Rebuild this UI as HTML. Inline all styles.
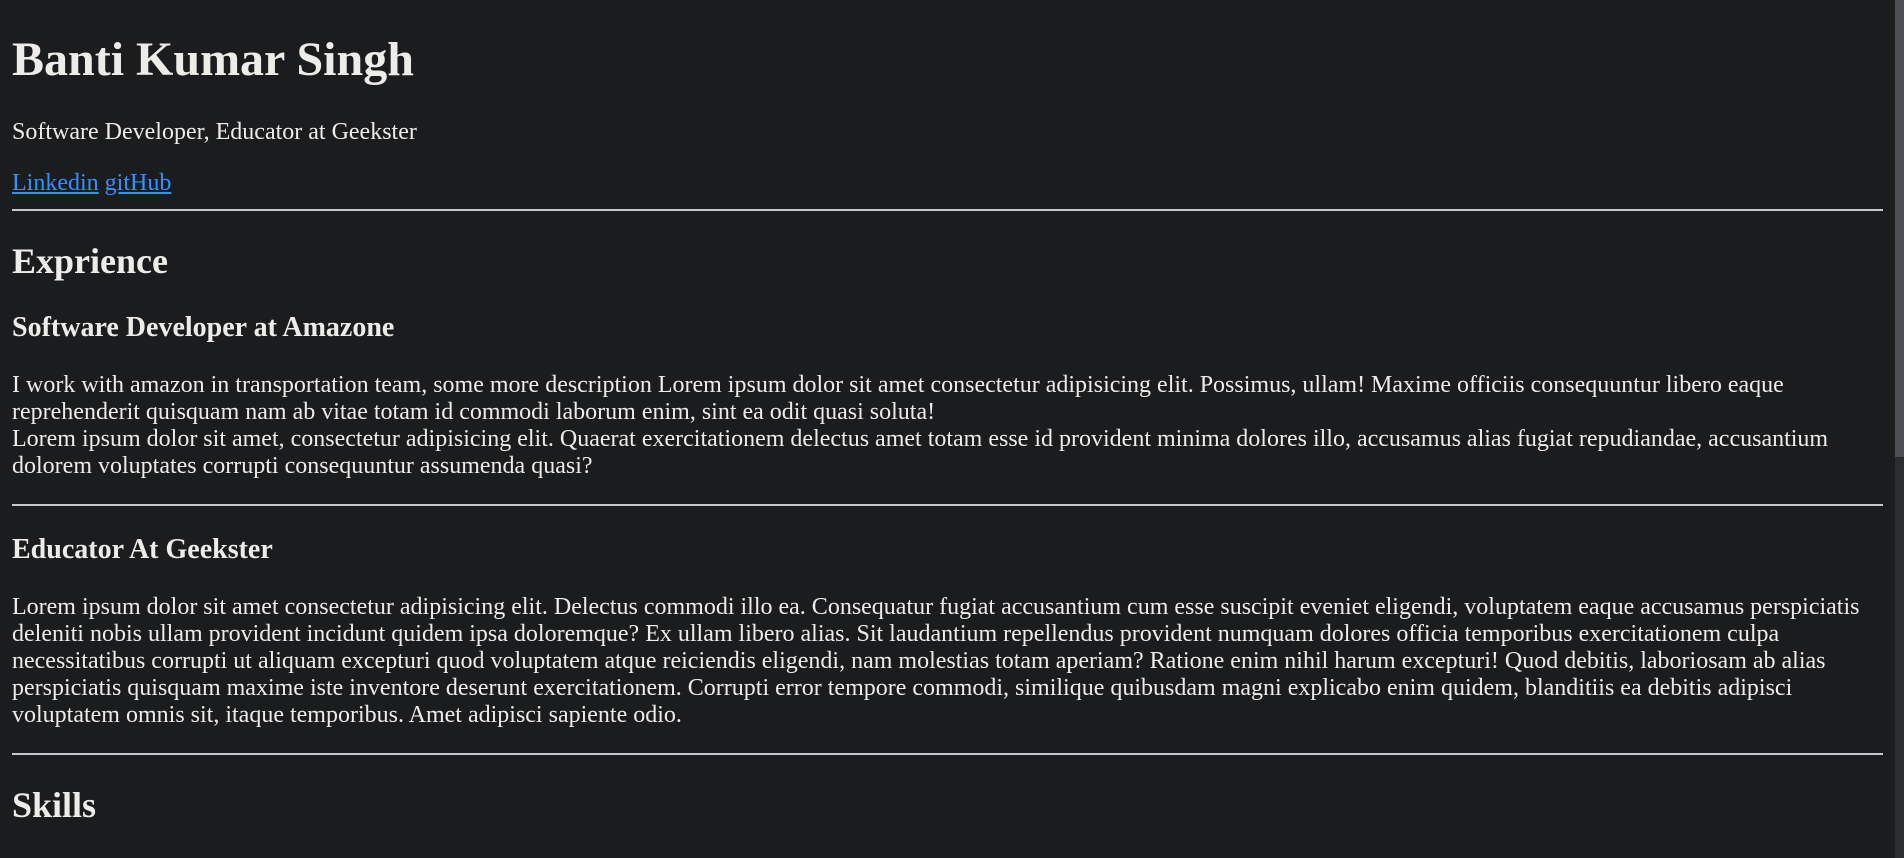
<!DOCTYPE html>
<html><head><meta charset="utf-8"><style>
html,body{margin:0;padding:0;height:858px;overflow:hidden;background:#1b1c1e;}
body{font-family:"Liberation Serif",serif;font-size:24px;line-height:27px;color:#eeece9;}
.wrap{position:absolute;left:12px;top:0;width:1871px;}
h1{font-size:48px;line-height:55px;margin:32px 0;}
h2{font-size:36px;line-height:41px;margin:30px 0;}
h3{font-size:28px;line-height:32px;margin:28px 0;}
p{margin:24px 0;}
a{color:#3391ff;text-decoration:underline;}
hr{border:0;border-top:2px solid #c8c8c8;margin:12px 0 12px;height:0;}
hr.first{margin:-12px 0 15px;}
.sb{position:absolute;right:0;top:0;width:9px;height:858px;background:#2b2d2f;}
.th{position:absolute;right:0;top:0;width:9px;height:457px;background:#4b4f53;}
</style></head><body>
<div class="wrap">
<h1>Banti Kumar Singh</h1>
<p>Software Developer, Educator at Geekster</p>
<p><a>Linkedin</a> <a>gitHub</a></p>
<hr class="first">
<h2>Exprience</h2>
<h3>Software Developer at Amazone</h3>
<p>I work with amazon in transportation team, some more description Lorem ipsum dolor sit amet consectetur adipisicing elit. Possimus, ullam! Maxime officiis consequuntur libero eaque reprehenderit quisquam nam ab vitae totam id commodi laborum enim, sint ea odit quasi soluta!<br>Lorem ipsum dolor sit amet, consectetur adipisicing elit. Quaerat exercitationem delectus amet totam esse id provident minima dolores illo, accusamus alias fugiat repudiandae, accusantium dolorem voluptates corrupti consequuntur assumenda quasi?</p>
<hr>
<h3>Educator At Geekster</h3>
<p>Lorem ipsum dolor sit amet consectetur adipisicing elit. Delectus commodi illo ea. Consequatur fugiat accusantium cum esse suscipit eveniet eligendi, voluptatem eaque accusamus perspiciatis deleniti nobis ullam provident incidunt quidem ipsa doloremque? Ex ullam libero alias. Sit laudantium repellendus provident numquam dolores officia temporibus exercitationem culpa necessitatibus corrupti ut aliquam excepturi quod voluptatem atque reiciendis eligendi, nam molestias totam aperiam? Ratione enim nihil harum excepturi! Quod debitis, laboriosam ab alias perspiciatis quisquam maxime iste inventore deserunt exercitationem. Corrupti error tempore commodi, similique quibusdam magni explicabo enim quidem, blanditiis ea debitis adipisci voluptatem omnis sit, itaque temporibus. Amet adipisci sapiente odio.</p>
<hr>
<h2>Skills</h2>
</div>
<div class="sb"><div class="th"></div></div>
</body></html>
